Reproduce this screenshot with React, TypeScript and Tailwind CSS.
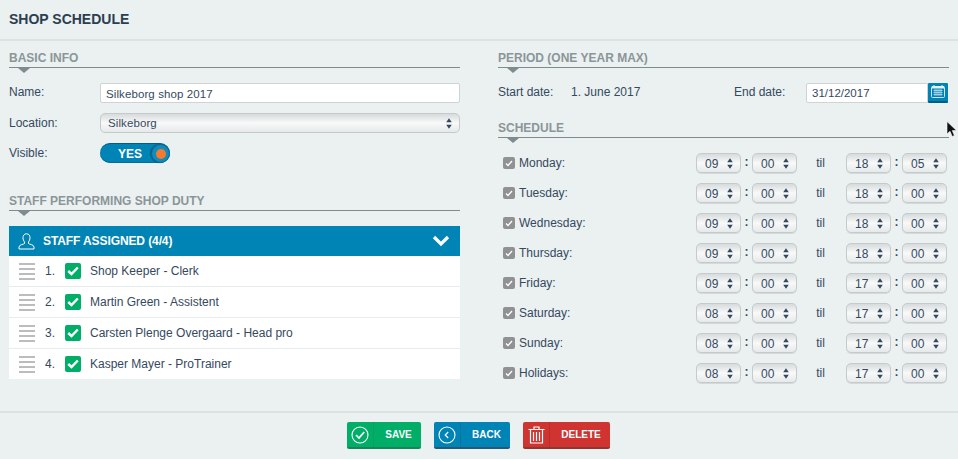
const staff = [
  "Shop Keeper - Clerk",
  "Martin Green - Assistent",
  "Carsten Plenge Overgaard - Head pro",
  "Kasper Mayer - ProTrainer",
];

const days = [
  { name: "Monday:", from: ["09", "00"], to: ["18", "05"] },
  { name: "Tuesday:", from: ["09", "00"], to: ["18", "00"] },
  { name: "Wednesday:", from: ["09", "00"], to: ["18", "00"] },
  { name: "Thursday:", from: ["09", "00"], to: ["18", "00"] },
  { name: "Friday:", from: ["09", "00"], to: ["17", "00"] },
  { name: "Saturday:", from: ["08", "00"], to: ["17", "00"] },
  { name: "Sunday:", from: ["08", "00"], to: ["17", "00"] },
  { name: "Holidays:", from: ["08", "00"], to: ["17", "00"] },
];

function SectionTitle({ title }: { title: string }) {
  return (
    <div>
      <h2 className="h-[27px] pt-[10px] border-b border-[#7f8c8d] text-[12px] leading-[15px] font-bold text-[#8a9697]">
        {title}
      </h2>
      <svg width="12" height="5" viewBox="0 0 12 5" className="block ml-[9px]">
        <path d="M0 0H12L6 5Z" fill="#7f8c8d" />
      </svg>
    </div>
  );
}

function Arrows({ color = "#34495e" }: { color?: string }) {
  return (
    <svg width="6" height="11" viewBox="0 0 6 11" className="block shrink-0">
      <path d="M3 0.2L5.8 4.2H0.2Z M3 10.8L0.2 6.8H5.8Z" fill={color} />
    </svg>
  );
}

function TimeSelect({ value }: { value: string }) {
  return (
    <div className="w-[45px] h-[20px] flex items-center justify-between pl-[8px] pr-[7px] rounded-[5px] border border-[#c5cacb] bg-gradient-to-b from-[#d8dbdc] via-[#f8f9f9] to-[#e6e9ea] shadow-[0_1px_0_#d5d9da] text-[12px] text-[#34495e]">
      <span className="pt-[1px]">{value}</span>
      <Arrows />
    </div>
  );
}

function ActionButton({
  label,
  width,
  bg,
  shadow,
  divider,
  icon,
}: {
  label: string;
  width: string;
  bg: string;
  shadow: string;
  divider: string;
  icon: React.ReactNode;
}) {
  return (
    <div className={`h-[27px] flex rounded-[2px] border-b-2 text-white ${width} ${bg} ${shadow}`}>
      <div className={`w-[27px] shrink-0 flex items-center justify-center border-r ${divider}`}>{icon}</div>
      <div className="flex-1 flex items-center justify-center pl-[2px] text-[10px] font-bold">{label}</div>
    </div>
  );
}

export default function App() {
  return (
    <div className="w-[958px] h-[459px] relative overflow-hidden bg-[#ebf0f1] text-[12px] text-[#34495e] [font-family:'Liberation_Sans',Arial,sans-serif]">
      <header className="h-[41px] px-[9px] flex items-center border-b-2 border-[#dde1e2]">
        <h1 className="text-[14px] font-bold text-[#2c3e50]">SHOP SCHEDULE</h1>
      </header>

      <main className="h-[372px] px-[9px] flex gap-[38px] border-b-2 border-[#dde1e2]">
        <section className="w-[451px]">
          <SectionTitle title="BASIC INFO" />
          <div className="mt-[10px] flex flex-col gap-[10px]">
            <div className="h-[20px] flex items-center">
              <label className="w-[91px] -mt-[2px]">Name:</label>
              <input
                readOnly
                value="Silkeborg shop 2017"
                className="w-[360px] h-[20px] px-[5px] pt-[1px] bg-white border border-[#cfd3d4] rounded-[2px] text-[11.5px] tracking-[0.1px] text-[#34495e] outline-none"
              />
            </div>
            <div className="h-[20px] flex items-center">
              <label className="w-[91px] -mt-[1px]">Location:</label>
              <div className="w-[360px] h-[20px] pl-[7px] pr-[7px] flex items-center justify-between rounded-[5px] border border-[#c5cacb] bg-gradient-to-b from-[#d8dbdc] via-[#f8f9f9] to-[#e6e9ea] text-[11.5px] tracking-[0.1px]">
                <span className="pt-[1px]">Silkeborg</span>
                <Arrows />
              </div>
            </div>
            <div className="h-[20px] flex items-center">
              <label className="w-[91px]">Visible:</label>
              <div className="w-[70px] h-[20px] rounded-full bg-[#0083b5] border-t border-[#005f85] flex items-center justify-between text-white shadow-[inset_0_-1px_0_#006e99]">
                <span className="ml-[18px] text-[12px] font-bold">YES</span>
                <span className="w-[19px] h-[19px] rounded-full bg-[#0f8cbc] border border-[#0a6a92] flex items-center justify-center shadow-[-1px_0_1px_#005f85]">
                  <span className="w-[10px] h-[10px] rounded-full bg-[#f47a30]" />
                </span>
              </div>
            </div>
          </div>

          <div className="mt-[21px]">
            <SectionTitle title="STAFF PERFORMING SHOP DUTY" />
          </div>
          <div className="mt-[10px]">
            <div className="h-[30px] pl-[9px] pr-[10px] flex items-center bg-[#0083b5] text-white">
              <svg width="17" height="17" viewBox="0 0 17 17" fill="none" stroke="#fff" strokeWidth="1" className="shrink-0">
                <path d="M8.5 0.8C6 0.8 5 2.6 5 4.8C5 6.6 5.8 8 6.5 9V10.5C6.5 11.2 1 11.5 1 14V16H16V14C16 11.5 10.5 11.2 10.5 10.5V9C11.2 8 12 6.6 12 4.8C12 2.6 11 0.8 8.5 0.8Z" />
              </svg>
              <span className="ml-[8px] text-[12px] font-bold tracking-[-0.1px] -mt-[1px]">STAFF ASSIGNED (4/4)</span>
              <svg width="18" height="12" viewBox="0 0 18 12" fill="none" stroke="#fff" strokeWidth="3.2" className="ml-auto">
                <path d="M2 2L9 9L16 2" />
              </svg>
            </div>
            <ul className="bg-white">
              {staff.map((person, i) => (
                <li key={person} className="h-[31px] flex items-center border-b border-[#e8eced] last:border-b-0 last:h-[30px]">
                  <div className="ml-[10px] w-[16px] flex flex-col gap-[3px]">
                    <span className="h-[2px] bg-[#bcbcbc]" />
                    <span className="h-[2px] bg-[#bcbcbc]" />
                    <span className="h-[2px] bg-[#bcbcbc]" />
                    <span className="h-[2px] bg-[#bcbcbc]" />
                  </div>
                  <span className="ml-[10px] w-[20px]">{i + 1}.</span>
                  <span className="w-[16px] h-[16px] rounded-[2px] bg-[#00ae68] flex items-center justify-center">
                    <svg width="12" height="10" viewBox="0 0 12 10" fill="none" stroke="#fff" strokeWidth="2.4">
                      <path d="M1.2 5L4.5 8L10.8 1.5" />
                    </svg>
                  </span>
                  <span className="ml-[9px] text-[12px]">{person}</span>
                </li>
              ))}
            </ul>
          </div>
        </section>

        <section className="w-[451px]">
          <SectionTitle title="PERIOD (ONE YEAR MAX)" />
          <div className="mt-[10px] h-[20px] flex items-center">
            <span className="w-[73px] -mt-[2px]">Start date:</span>
            <span className="w-[163px] -mt-[2px]">1. June 2017</span>
            <span className="w-[72px] -mt-[2px]">End date:</span>
            <div className="w-[143px] h-[21px] flex">
              <input
                readOnly
                value="31/12/2017"
                className="w-[122px] h-[20px] px-[5px] pt-[1px] bg-white border border-[#cfd3d4] rounded-l-[2px] text-[11.5px] text-[#34495e] outline-none"
              />
              <div className="w-[20px] h-[20px] bg-[#0083b5] border-b-2 border-[#005f85] rounded-[1px] flex items-center justify-center">
                <svg width="14" height="13" viewBox="0 0 14 13">
                  <rect x="0.5" y="1.5" width="13" height="11" rx="1" fill="none" stroke="#cfe5ef" />
                  <rect x="1" y="1" width="12" height="2.5" fill="#e4f1f6" />
                  <path d="M3 0V2M11 0V2" stroke="#e4f1f6" />
                  <path d="M2.5 5.5H11.5M2.5 7.5H11.5M2.5 9.5H11.5M4 4V11M6 4V11M8 4V11M10 4V11" stroke="#bcdbe8" strokeWidth="0.8" />
                </svg>
              </div>
            </div>
          </div>

          <div className="mt-[8px]">
            <SectionTitle title="SCHEDULE" />
          </div>
          <div className="mt-[10px] flex flex-col gap-[10px]">
            {days.map((day) => (
              <div key={day.name} className="h-[20px] flex items-center">
                <span className="ml-[5px] w-[12px] h-[12px] rounded-[2px] bg-[#8f9192] flex items-center justify-center">
                  <svg width="8" height="7" viewBox="0 0 8 7" fill="none" stroke="#fff" strokeWidth="1.3">
                    <path d="M1 3.5L3 5.5L7 1" />
                  </svg>
                </span>
                <span className="ml-[4px] w-[177px] -mt-[1px]">{day.name}</span>
                <TimeSelect value={day.from[0]} />
                <span className="w-[11px] text-center font-bold -mt-[2px]">:</span>
                <TimeSelect value={day.from[1]} />
                <span className="w-[49px] pr-[2px] text-center">til</span>
                <TimeSelect value={day.to[0]} />
                <span className="w-[11px] text-center font-bold -mt-[2px]">:</span>
                <TimeSelect value={day.to[1]} />
              </div>
            ))}
          </div>
        </section>
      </main>

      <footer className="pt-[9px] pr-[1px] flex justify-center gap-[13px]">
        <ActionButton
          label="SAVE"
          width="w-[74px]"
          bg="bg-[#00ae68]"
          shadow="border-[#17855a]"
          divider="border-[#0d9c62]"
          icon={
            <svg width="18" height="18" viewBox="0 0 18 18" fill="none" stroke="#fff">
              <circle cx="9" cy="9" r="8" strokeWidth="1.1" />
              <path d="M5 9L8 12L13.2 6" strokeWidth="1.7" />
            </svg>
          }
        />
        <ActionButton
          label="BACK"
          width="w-[76px]"
          bg="bg-[#0083b5]"
          shadow="border-[#245a78]"
          divider="border-[#0a74a0]"
          icon={
            <svg width="18" height="18" viewBox="0 0 18 18" fill="none" stroke="#fff">
              <circle cx="9" cy="9" r="8" strokeWidth="1.1" />
              <path d="M10.2 6L7.2 9L10.2 12" strokeWidth="1.2" />
            </svg>
          }
        />
        <ActionButton
          label="DELETE"
          width="w-[87px]"
          bg="bg-[#cf3430]"
          shadow="border-[#8f3532]"
          divider="border-[#b92d2a]"
          icon={
            <svg width="17" height="18" viewBox="0 0 17 18" fill="none" stroke="#fff" strokeWidth="1.2">
              <path d="M0.5 3.5H16.5M6 3.5V1H11V3.5M2.5 3.5V17H14.5V3.5M5.5 6V15M8.5 6V15M11.5 6V15" />
            </svg>
          }
        />
      </footer>

      <svg width="12" height="17" viewBox="0 0 12 17" className="absolute left-[946px] top-[121px]">
        <path d="M1 0.5V13L4 10.3L6.2 15.5L8.4 14.5L6.3 9.6H10.5Z" fill="#111" stroke="#fff" strokeWidth="0.6" />
      </svg>
    </div>
  );
}
